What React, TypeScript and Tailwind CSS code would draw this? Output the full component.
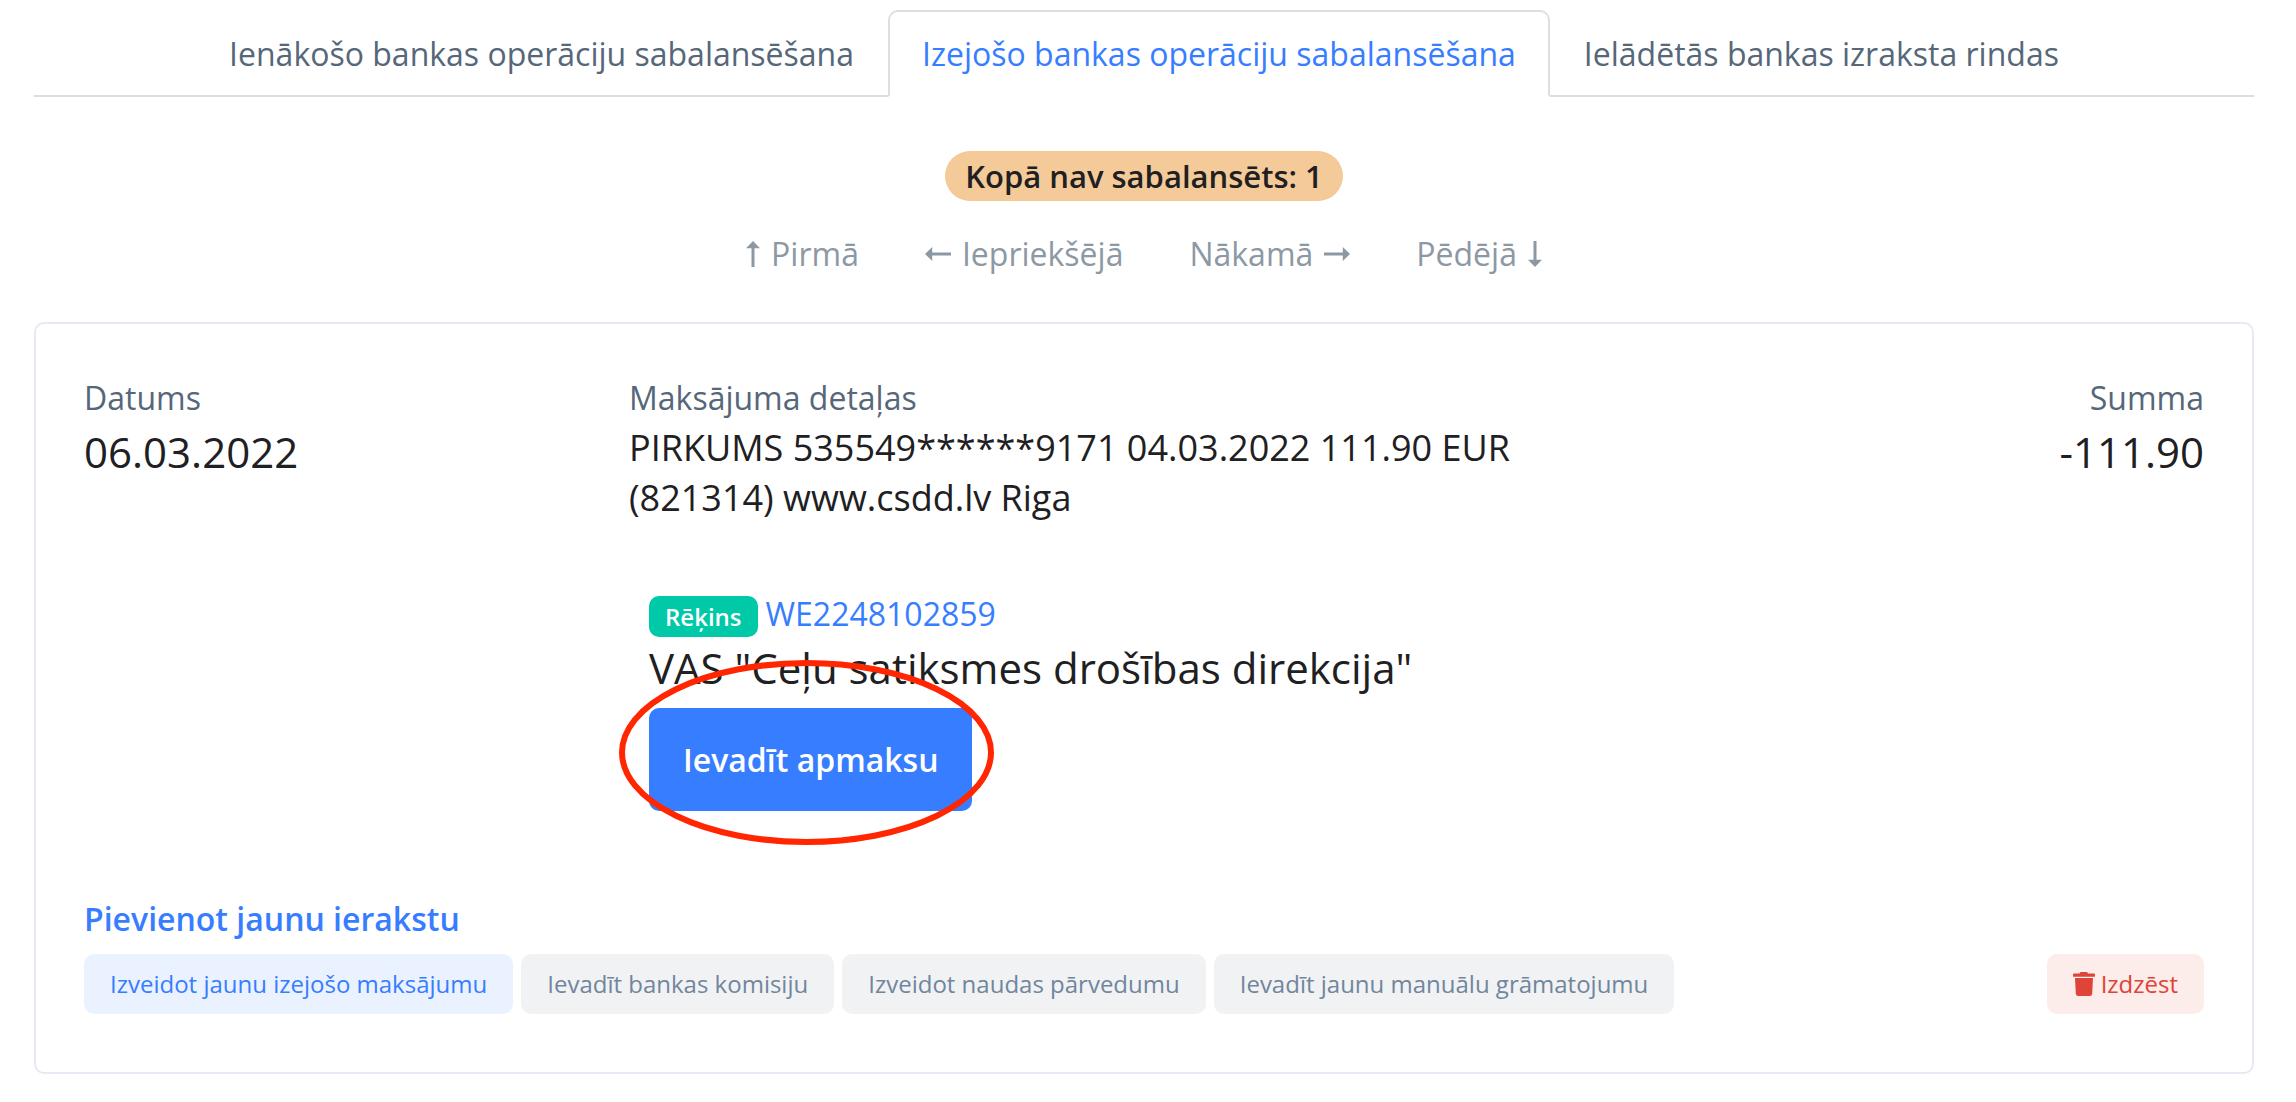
import React from 'react';

type ArrowDirection = 'up' | 'down' | 'left' | 'right';

interface ArrowProps {
  direction: ArrowDirection;
}

const TABS = [
  { label: 'Ienākošo bankas operāciju sabalansēšana', active: false },
  { label: 'Izejošo bankas operāciju sabalansēšana', active: true },
  { label: 'Ielādētās bankas izraksta rindas', active: false },
];

const ENTRY_ACTIONS = [
  { label: 'Izveidot jaunu izejošo maksājumu', primary: true },
  { label: 'Ievadīt bankas komisiju', primary: false },
  { label: 'Izveidot naudas pārvedumu', primary: false },
  { label: 'Ievadīt jaunu manuālu grāmatojumu', primary: false },
];

const Arrow: React.FC<ArrowProps> = ({ direction }) => {
  if (direction === 'up' || direction === 'down') {
    return (
      <svg width="14" height="26" viewBox="0 0 14 26" fill="currentColor" aria-hidden="true">
        {direction === 'up' ? (
          <path d="M7 0 L14 7.2 H8.5 V26 H5.5 V7.2 H0 Z" />
        ) : (
          <path d="M7 26 L0 18.8 H5.5 V0 H8.5 V18.8 H14 Z" />
        )}
      </svg>
    );
  }
  return (
    <svg width="26" height="14" viewBox="0 0 26 14" fill="currentColor" aria-hidden="true">
      {direction === 'left' ? (
        <path d="M0 7 L7.2 0 V5.5 H26 V8.5 H7.2 V14 Z" />
      ) : (
        <path d="M26 7 L18.8 0 V5.5 H0 V8.5 H18.8 V14 Z" />
      )}
    </svg>
  );
};

const TrashIcon: React.FC = () => (
  <svg width="22" height="24" viewBox="0 0 22 24" fill="currentColor" aria-hidden="true">
    <path d="M7.5 0 H14 L15 1.5 H21 Q22 1.5 22 2.5 V4.7 H0 V2.5 Q0 1.5 1 1.5 H6.5 Z" />
    <path d="M2 6 H20 L19.2 21.5 Q19 24 16.8 24 H5.2 Q3 24 2.8 21.5 Z" />
  </svg>
);

const App: React.FC = () => {
  return (
    <main className="bg-white pl-[34px] pr-[42px] pt-[10px] pb-7 font-['Open_Sans',sans-serif] text-[32px] leading-[51px] text-[#1e2022]">
      {/* Tabs */}
      <nav className="flex justify-center border-b-2 border-[#dedede]">
        {TABS.map((tab) => (
          <a
            key={tab.label}
            href="#"
            className={`-mb-[2px] px-8 py-4 border-2 rounded-t-[10px] whitespace-nowrap ${
              tab.active
                ? 'border-[#dedede] border-b-white bg-white text-[#377dff]'
                : 'border-transparent text-[#566779]'
            }`}
          >
            {tab.label}
          </a>
        ))}
      </nav>

      <div className="mt-[54px] flex justify-center">
        <span className="rounded-full bg-[#f5ca99] px-5 text-[31px] leading-[50px] font-semibold">
          Kopā nav sabalansēts: 1
        </span>
      </div>

      {/* Pager */}
      <div className="mt-[27px] flex justify-center gap-[66px] text-[#8c98a4]">
        <button type="button" className="flex items-center gap-[11px]">
          <Arrow direction="up" />
          Pirmā
        </button>
        <button type="button" className="flex items-center gap-[11px]">
          <Arrow direction="left" />
          Iepriekšējā
        </button>
        <button type="button" className="flex items-center gap-[11px]">
          Nākamā
          <Arrow direction="right" />
        </button>
        <button type="button" className="flex items-center gap-[11px]">
          Pēdējā
          <Arrow direction="down" />
        </button>
      </div>

      {/* Transaction */}
      <section className="mt-[43px] rounded-[10px] border-2 border-[#e7eaf3] px-12 pt-12 pb-[58px]">
        <div className="grid grid-cols-12 gap-x-[60px]">
          <div className="col-span-3">
            <div className="text-[#566779]">Datums</div>
            <div className="text-[42px] leading-[58px]">06.03.2022</div>
          </div>

          <div className="col-span-6">
            <div className="text-[#566779]">Maksājuma detaļas</div>
            <p className="text-[36px] leading-[50px]">
              PIRKUMS 535549******9171 04.03.2022 111.90 EUR (821314) www.csdd.lv Riga
            </p>

            <div className="mt-[65px] pl-5">
              <div className="flex items-center gap-2">
                <span className="mt-[5px] rounded-[10px] bg-[#00c9a7] px-4 text-[24px] leading-[41px] font-semibold text-white">
                  Rēķins
                </span>
                <a href="#" className="text-[#377dff]">WE2248102859</a>
              </div>
              <div className="text-[42px] leading-[58px]">VAS "Ceļu satiksmes drošības direkcija"</div>
              <div className="relative mt-[11px] w-fit">
                <button
                  type="button"
                  className="block rounded-[10px] bg-[#377dff] px-[34px] py-[26px] font-semibold whitespace-nowrap text-white"
                >
                  Ievadīt apmaksu
                </button>
                {/* Red ring around the payment button */}
                <svg
                  className="pointer-events-none absolute -top-12 -left-[30px]"
                  width="376"
                  height="185"
                  viewBox="0 0 376 185"
                  fill="none"
                  aria-hidden="true"
                >
                  <ellipse cx="187.5" cy="92.5" rx="184.5" ry="89.5" stroke="#ff2600" strokeWidth="6" />
                </svg>
              </div>
            </div>
          </div>

          <div className="col-span-3 text-right">
            <div className="text-[#566779]">Summa</div>
            <div className="text-[42px] leading-[58px]">-111.90</div>
          </div>
        </div>

        <h3 className="mt-[82px] font-semibold text-[#377dff]">Pievienot jaunu ierakstu</h3>
        <div className="mt-[10px] flex items-center gap-2 text-[24px] leading-9">
          {ENTRY_ACTIONS.map((action) => (
            <button
              key={action.label}
              type="button"
              className={`rounded-[10px] px-[26px] py-3 whitespace-nowrap ${
                action.primary ? 'bg-[#ebf2ff] text-[#377dff]' : 'bg-[#f1f2f4] text-[#71869d]'
              }`}
            >
              {action.label}
            </button>
          ))}
          <button
            type="button"
            className="ml-auto flex items-center gap-[6px] rounded-[10px] bg-[#fcecea] px-[26px] py-3 text-[#de4437]"
          >
            <TrashIcon />
            Izdzēst
          </button>
        </div>
      </section>
    </main>
  );
};

export default App;
